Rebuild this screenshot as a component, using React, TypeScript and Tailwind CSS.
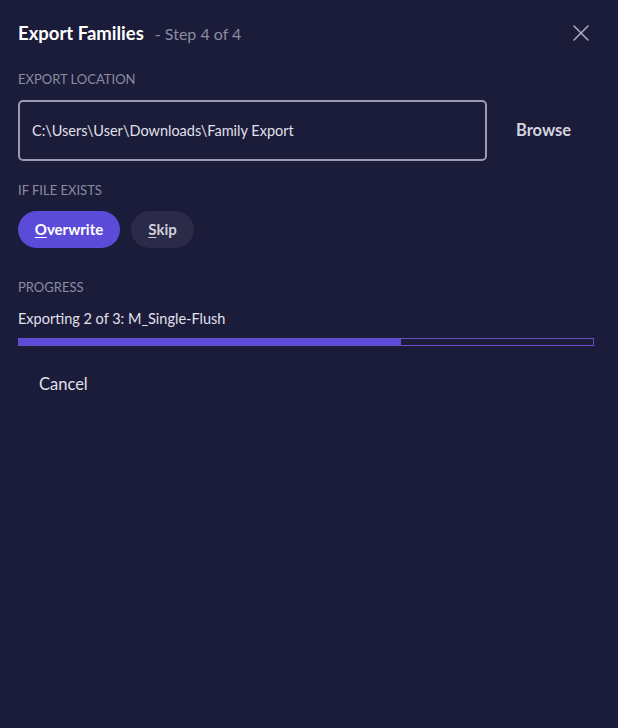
import { X } from 'lucide-react'

export default function App() {
  const progress = 66.5

  return (
    <div className="w-[618px] h-[728px] bg-[#1b1b3a] text-[#e6e6ee] font-['Lato','Noto_Sans',sans-serif] pl-[18px] pr-[23px] pt-[21px]">
      {/* Header */}
      <div className="flex h-[24px] items-center justify-between">
        <div className="flex items-baseline gap-[11px]">
          <h1 className="text-[18.5px] leading-[24px] font-bold text-white">Export Families</h1>
          <span className="text-[16px] leading-[24px] text-[#8c8ca0]">- Step 4 of 4</span>
        </div>
        <button className="text-[#a8a8b8]" aria-label="Close">
          <X className="h-[28px] w-[28px]" strokeWidth={1.3} />
        </button>
      </div>

      {/* Export location */}
      <div className="mt-[26px] text-[13px] leading-[16px] text-[#8c8ca0]">EXPORT LOCATION</div>
      <div className="mt-[13px] flex items-center">
        <div className="w-[469px] h-[61px] rounded-[5px] border-2 border-[#9a9ab0] flex items-center px-[12px] text-[14.5px] text-[#e0e0ea]">
          C:\Users\User\Downloads\Family Export
        </div>
        <button className="ml-[29px] text-[16.5px] font-bold text-[#d4d4de]">Browse</button>
      </div>

      {/* If file exists */}
      <div className="mt-[21px] text-[13px] leading-[16px] text-[#8c8ca0]">IF FILE EXISTS</div>
      <div className="mt-[13px] flex gap-[11px]">
        <button className="h-[37px] w-[102px] rounded-full bg-[#5b4bd8] text-[15px] font-bold text-white">
          <span className="underline underline-offset-2">O</span>verwrite
        </button>
        <button className="h-[37px] w-[63px] rounded-full bg-[#2b2a48] text-[15px] font-bold text-[#cfcfda]">
          <span className="underline underline-offset-2">S</span>kip
        </button>
      </div>

      {/* Progress */}
      <div className="mt-[31px] text-[13px] leading-[16px] text-[#8c8ca0]">PROGRESS</div>
      <div className="mt-[15px] text-[14.5px] leading-[18px] text-[#e0e0ea]">Exporting 2 of 3: M_Single-Flush</div>
      <div className="mt-[10px] w-[576px] h-[8px] border border-[#6a4fc4] bg-[#1e1c3c]">
        <div className="h-full bg-[#5b4bd8]" style={{ width: `${progress}%` }} />
      </div>

      <button className="mt-[28px] ml-[21px] text-[16.5px] leading-[20px] text-[#e0e0ea]">Cancel</button>
    </div>
  )
}
